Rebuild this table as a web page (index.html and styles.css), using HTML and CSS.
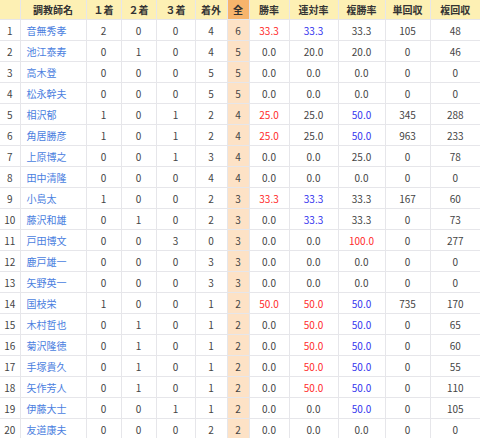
FILE: index.html
```html
<!DOCTYPE html>
<html lang="ja">
<head>
<meta charset="utf-8">
<link rel="stylesheet" href="styles.css">
</head>
<body>
<table class="stats">
<colgroup>
<col class="c-no"><col class="c-name"><col class="c-n"><col class="c-n"><col class="c-n3"><col class="c-out"><col class="c-all"><col class="c-r1"><col class="c-r2"><col class="c-r3"><col class="c-r4"><col class="c-r5">
</colgroup>
<thead>
<tr><th></th><th>調教師名</th><th>１着</th><th>２着</th><th>３着</th><th>着外</th><th class="all">全</th><th>勝率</th><th>連対率</th><th>複勝率</th><th>単回収</th><th>複回収</th></tr>
</thead>
<tbody>
<tr><td>1</td><td class="name">音無秀孝</td><td>2</td><td>0</td><td>0</td><td>4</td><td class="all">6</td><td class="red">33.3</td><td class="blue">33.3</td><td>33.3</td><td>105</td><td>48</td></tr>
<tr><td>2</td><td class="name">池江泰寿</td><td>0</td><td>1</td><td>0</td><td>4</td><td class="all">5</td><td>0.0</td><td>20.0</td><td>20.0</td><td>0</td><td>46</td></tr>
<tr><td>3</td><td class="name">高木登</td><td>0</td><td>0</td><td>0</td><td>5</td><td class="all">5</td><td>0.0</td><td>0.0</td><td>0.0</td><td>0</td><td>0</td></tr>
<tr><td>4</td><td class="name">松永幹夫</td><td>0</td><td>0</td><td>0</td><td>5</td><td class="all">5</td><td>0.0</td><td>0.0</td><td>0.0</td><td>0</td><td>0</td></tr>
<tr><td>5</td><td class="name">相沢郁</td><td>1</td><td>0</td><td>1</td><td>2</td><td class="all">4</td><td class="red">25.0</td><td>25.0</td><td class="blue">50.0</td><td>345</td><td>288</td></tr>
<tr><td>6</td><td class="name">角居勝彦</td><td>1</td><td>0</td><td>1</td><td>2</td><td class="all">4</td><td class="red">25.0</td><td>25.0</td><td class="blue">50.0</td><td>963</td><td>233</td></tr>
<tr><td>7</td><td class="name">上原博之</td><td>0</td><td>0</td><td>1</td><td>3</td><td class="all">4</td><td>0.0</td><td>0.0</td><td>25.0</td><td>0</td><td>78</td></tr>
<tr><td>8</td><td class="name">田中清隆</td><td>0</td><td>0</td><td>0</td><td>4</td><td class="all">4</td><td>0.0</td><td>0.0</td><td>0.0</td><td>0</td><td>0</td></tr>
<tr><td>9</td><td class="name">小島太</td><td>1</td><td>0</td><td>0</td><td>2</td><td class="all">3</td><td class="red">33.3</td><td class="blue">33.3</td><td>33.3</td><td>167</td><td>60</td></tr>
<tr><td>10</td><td class="name">藤沢和雄</td><td>0</td><td>1</td><td>0</td><td>2</td><td class="all">3</td><td>0.0</td><td class="blue">33.3</td><td>33.3</td><td>0</td><td>73</td></tr>
<tr><td>11</td><td class="name">戸田博文</td><td>0</td><td>0</td><td>3</td><td>0</td><td class="all">3</td><td>0.0</td><td>0.0</td><td class="red">100.0</td><td>0</td><td>277</td></tr>
<tr><td>12</td><td class="name">鹿戸雄一</td><td>0</td><td>0</td><td>0</td><td>3</td><td class="all">3</td><td>0.0</td><td>0.0</td><td>0.0</td><td>0</td><td>0</td></tr>
<tr><td>13</td><td class="name">矢野英一</td><td>0</td><td>0</td><td>0</td><td>3</td><td class="all">3</td><td>0.0</td><td>0.0</td><td>0.0</td><td>0</td><td>0</td></tr>
<tr><td>14</td><td class="name">国枝栄</td><td>1</td><td>0</td><td>0</td><td>1</td><td class="all">2</td><td class="red">50.0</td><td class="red">50.0</td><td class="blue">50.0</td><td>735</td><td>170</td></tr>
<tr><td>15</td><td class="name">木村哲也</td><td>0</td><td>1</td><td>0</td><td>1</td><td class="all">2</td><td>0.0</td><td class="red">50.0</td><td class="blue">50.0</td><td>0</td><td>65</td></tr>
<tr><td>16</td><td class="name">菊沢隆徳</td><td>0</td><td>1</td><td>0</td><td>1</td><td class="all">2</td><td>0.0</td><td class="red">50.0</td><td class="blue">50.0</td><td>0</td><td>60</td></tr>
<tr><td>17</td><td class="name">手塚貴久</td><td>0</td><td>1</td><td>0</td><td>1</td><td class="all">2</td><td>0.0</td><td class="red">50.0</td><td class="blue">50.0</td><td>0</td><td>55</td></tr>
<tr><td>18</td><td class="name">矢作芳人</td><td>0</td><td>1</td><td>0</td><td>1</td><td class="all">2</td><td>0.0</td><td class="red">50.0</td><td class="blue">50.0</td><td>0</td><td>110</td></tr>
<tr><td>19</td><td class="name">伊藤大士</td><td>0</td><td>0</td><td>1</td><td>1</td><td class="all">2</td><td>0.0</td><td>0.0</td><td class="blue">50.0</td><td>0</td><td>105</td></tr>
<tr><td>20</td><td class="name">友道康夫</td><td>0</td><td>0</td><td>0</td><td>2</td><td class="all">2</td><td>0.0</td><td>0.0</td><td>0.0</td><td>0</td><td>0</td></tr>
</tbody>
</table>
</body>
</html>
```
FILE: styles.css
```css
html, body {
  margin: 0;
  padding: 0;
  background: #ffffff;
}
.stats {
  width: 480px;
  table-layout: fixed;
  border-collapse: collapse;
  font-family: "Noto Sans CJK JP", "Noto Sans", sans-serif;
  font-size: 10px;
  color: #444444;
}
.c-no { width: 20px; }
.c-name { width: 66px; }
.c-n { width: 35px; }
.c-n3 { width: 39px; }
.c-out { width: 32px; }
.c-all { width: 22px; }
.c-r1 { width: 40px; }
.c-r2 { width: 49px; }
.c-r3 { width: 47px; }
.c-r4 { width: 45px; }
.c-r5 { width: 50px; }
.stats th, .stats td {
  border: 1px solid #e6e6ea;
  text-align: center;
  padding: 0;
  overflow: hidden;
  white-space: nowrap;
}
.stats th {
  height: 19px;
  background: #fdf0b4;
  font-weight: bold;
  color: #333333;
}
.stats td {
  height: 20px;
}
.stats th.all {
  background: #f7b46c;
}
.stats td.all {
  background: #fde2c6;
}
.stats td.name {
  text-align: left;
  padding-left: 6px;
  color: #4a7ee0;
}
.stats td.red { color: #ff2a2a; }
.stats td.blue { color: #3434ee; }
.stats th:first-child, .stats td:first-child { border-left: none; }
.stats th:last-child, .stats td:last-child { border-right: none; }
.stats thead th { border-top: none; }
```
